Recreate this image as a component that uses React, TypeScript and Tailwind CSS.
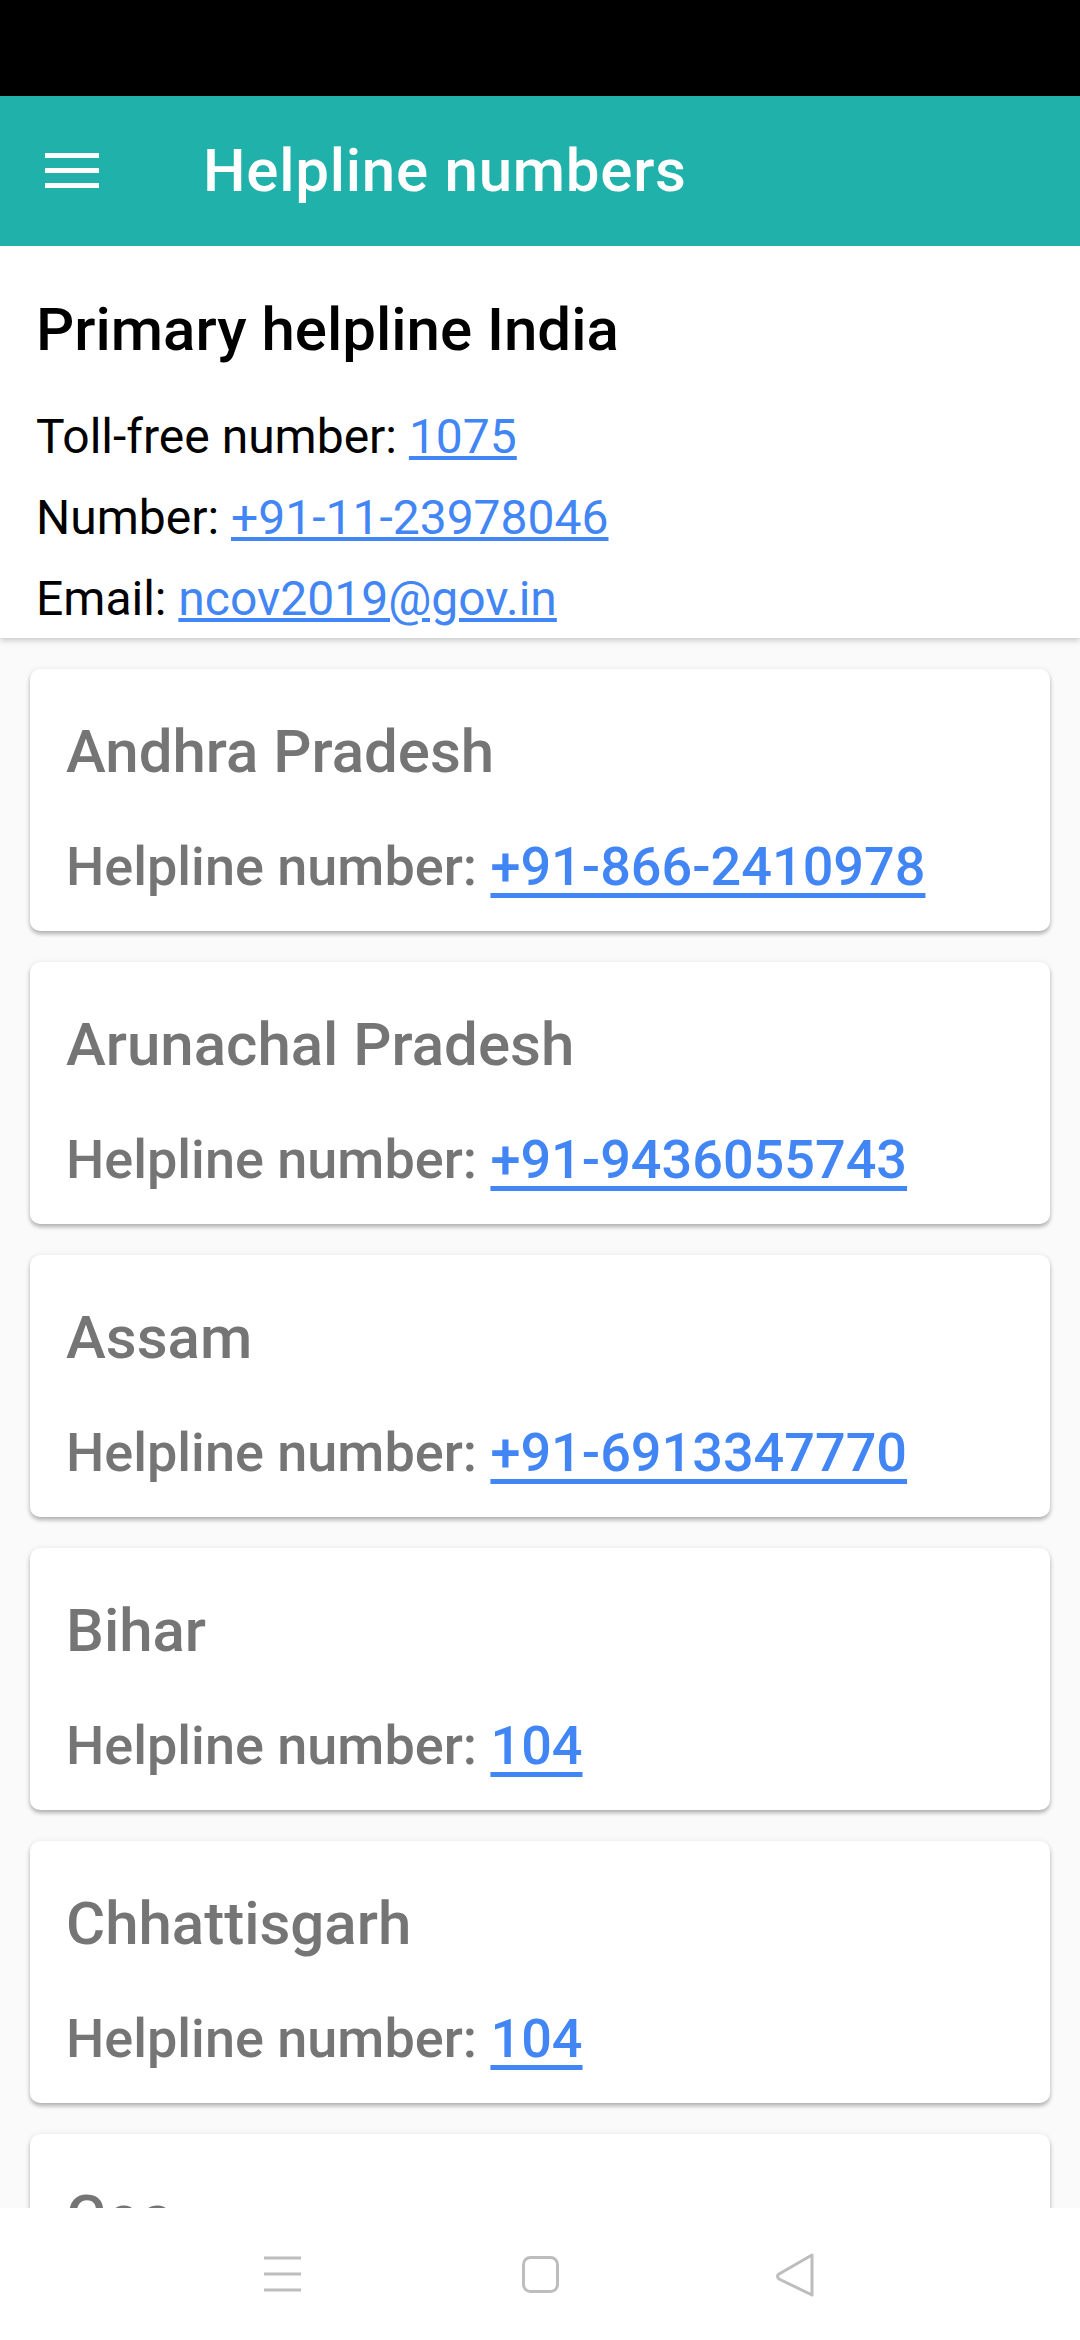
import React from "react";

const states: { name: string; num: string }[] = [
  { name: "Andhra Pradesh", num: "+91-866-2410978" },
  { name: "Arunachal Pradesh", num: "+91-9436055743" },
  { name: "Assam", num: "+91-6913347770" },
  { name: "Bihar", num: "104" },
  { name: "Chhattisgarh", num: "104" },
  { name: "Goa", num: "104" },
  { name: "Gujarat", num: "104" },
];

export default function App() {
  return (
    <div
      className="w-[1080px] h-[2340px] flex flex-col overflow-hidden bg-[#fafafa]"
      style={{ fontFamily: "Roboto, 'Noto Sans', sans-serif" }}
    >
      <div className="h-[96px] bg-black shrink-0" />
      <header className="h-[150px] bg-[#20b2aa] shrink-0 flex items-center relative z-20">
        <div className="ml-[45px] w-[54px] flex flex-col gap-[10px] mt-[-2px]">
          <div className="h-[5px] bg-white" />
          <div className="h-[5px] bg-white" />
          <div className="h-[5px] bg-white" />
        </div>
        <h1 className="ml-[104px] text-[60px] leading-[70px] font-medium text-white tracking-[0.75px]">
          Helpline numbers
        </h1>
      </header>
      <section className="bg-white shrink-0 pl-[36px] pt-[49px] h-[392px] relative z-10 shadow-[0_2px_6px_rgba(0,0,0,0.22)]">
        <h2 className="text-[60px] leading-[70px] font-medium text-black">Primary helpline India</h2>
        <div className="mt-[31px] text-[48px] leading-[81px] text-black">
          <div>
            Toll-free number: <span className="text-[#4285f4] underline">1075</span>
          </div>
          <div>
            Number: <span className="text-[#4285f4] underline">+91-11-23978046</span>
          </div>
          <div>
            Email: <span className="text-[#4285f4] underline">ncov2019@gov.in</span>
          </div>
        </div>
      </section>
      <main className="flex-1 overflow-hidden px-[30px] pt-[31px] flex flex-col gap-[31px]">
        {states.map((s) => (
          <div
            key={s.name}
            className="bg-white rounded-[10px] shrink-0 pl-[36px] pt-[48px] pb-[33px] shadow-[0_3px_4px_rgba(0,0,0,0.28),0_0_6px_rgba(0,0,0,0.06)]"
          >
            <div className="text-[60px] leading-[70px] font-medium text-[#757575]">{s.name}</div>
            <div className="mt-[48px] text-[54px] leading-[63px] font-medium text-[#757575]">
              Helpline number:{" "}
              <span className="text-[#4285f4] underline decoration-[5px] underline-offset-[8px]">
                {s.num}
              </span>
            </div>
          </div>
        ))}
      </main>
      <nav className="h-[132px] bg-white shrink-0 relative z-20">
        <svg width="1080" height="132" viewBox="0 0 1080 132" className="block">
          <g stroke="#bdbdbd" strokeWidth="3" fill="none" strokeLinejoin="round" strokeLinecap="round">
            <line x1="264" y1="50" x2="301" y2="50" strokeLinecap="butt" />
            <line x1="264" y1="66" x2="301" y2="66" strokeLinecap="butt" />
            <line x1="264" y1="82" x2="301" y2="82" strokeLinecap="butt" />
            <rect x="523.5" y="49.5" width="34" height="34" rx="7" />
            <path d="M812 47 L779 66 Q776 68 779 71 L812 87 Z" />
          </g>
        </svg>
      </nav>
    </div>
  );
}
